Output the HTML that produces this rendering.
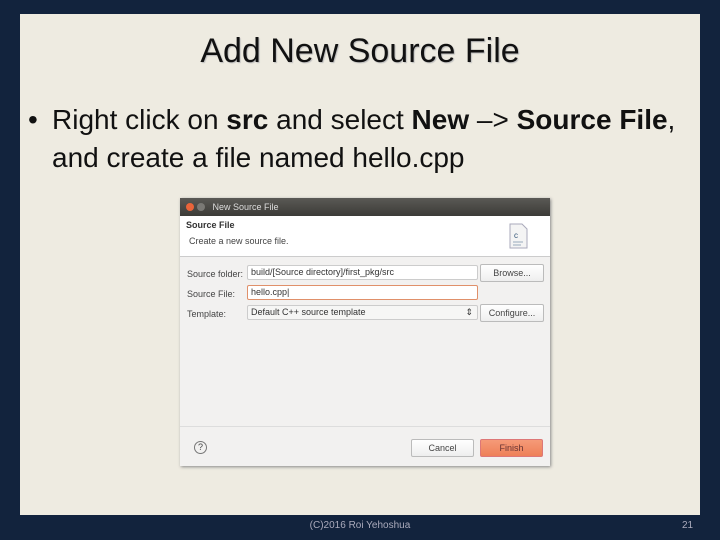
<!DOCTYPE html>
<html><head><meta charset="utf-8"><style>
body{margin:0;width:720px;height:540px;background:#12233d;position:relative;overflow:hidden;font-family:"Liberation Sans",sans-serif}
.slide{position:absolute;left:20px;top:14px;width:680px;height:501px;background:#eeebe1}
.title{position:absolute;left:0;width:720px;top:32px;text-align:center;font-size:34px;color:#111;text-shadow:1px 1px 1px #bbb}
.b{position:absolute;left:28px;top:101px;font-size:28px;color:#111;line-height:38px}
.b .d{position:absolute;left:0;top:0}
.b .t{margin-left:24px;white-space:nowrap}
.dlg{position:absolute;left:180px;top:198px;width:370px;height:268px;background:#f2f1f0;box-shadow:1px 1px 3px #888;font-size:9px;color:#444}
.tb{height:18px;background:linear-gradient(#5a5955,#3c3b37);color:#ddd;font-size:9px;line-height:18px}
.hd{position:absolute;top:18px;left:0;right:0;height:40px;background:#fff;border-bottom:1px solid #ccc}
.in{position:absolute;left:67px;width:226px;height:13px;background:#fff;border:1px solid #ccc;border-radius:2px;line-height:13px;padding-left:3px;font-size:9px;color:#333}
.lb{position:absolute;left:7px}
.btn{position:absolute;height:16px;border:1px solid #bbb;border-radius:2px;background:linear-gradient(#fff,#eee);text-align:center;line-height:16px}
.foot{position:absolute;top:520px;width:720px;text-align:center;color:#aab;font-size:10px}
</style></head><body>
<div class="slide"></div>
<div class="title">Add New Source File</div>
<div class="b"><span class="d">•</span><div class="t">Right click on <b>src</b> and select <b>New</b> –&gt; <b>Source File</b>,<br>and create a file named hello.cpp</div></div>
<div class="dlg">
<div class="tb"><span style="display:inline-block;width:8px;height:8px;border-radius:50%;background:#e9643a;margin:0 3px 0 6px;vertical-align:-1px"></span><span style="display:inline-block;width:8px;height:8px;border-radius:50%;background:#7a7975;vertical-align:-1px"></span> &nbsp; New Source File</div>
<div class="hd"><div style="position:absolute;left:6px;top:4px;font-weight:bold;color:#333">Source File</div><div style="position:absolute;left:9px;top:20px">Create a new source file.</div>
<svg style="position:absolute;left:328px;top:7px" width="20" height="26"><path d="M2 1h12l5 5v19H2z" fill="#f4f4f4" stroke="#aab"/><text x="6" y="15" font-size="8" fill="#357">c</text><path d="M5 19h10M5 22h8" stroke="#9ab"/></svg></div>
<div class="lb" style="top:71px">Source folder:</div><div class="in" style="top:67px">build/[Source directory]/first_pkg/src</div>
<div class="btn" style="left:300px;top:66px;width:62px">Browse...</div>
<div class="lb" style="top:91px">Source File:</div><div class="in" style="top:87px;border-color:#e0906a">hello.cpp|</div>
<div class="lb" style="top:111px">Template:</div><div class="in" style="top:107px;background:#f6f6f5">Default C++ source template<span style="position:absolute;right:4px">⇕</span></div>
<div class="btn" style="left:300px;top:106px;width:62px">Configure...</div>
<div style="position:absolute;left:0;right:0;top:228px;border-top:1px solid #ddd"></div>
<div style="position:absolute;left:14px;top:243px;width:11px;height:11px;border:1px solid #777;border-radius:50%;text-align:center;line-height:11px;font-size:9px">?</div>
<div class="btn" style="left:231px;top:241px;width:61px">Cancel</div>
<div class="btn" style="left:300px;top:241px;width:61px;background:linear-gradient(#f59a78,#ee8058);border-color:#d77;color:#633">Finish</div>
</div>
<div class="foot">(C)2016 Roi Yehoshua</div>
<div style="position:absolute;top:520px;left:682px;color:#aab;font-size:10px">21</div>
</body></html>
